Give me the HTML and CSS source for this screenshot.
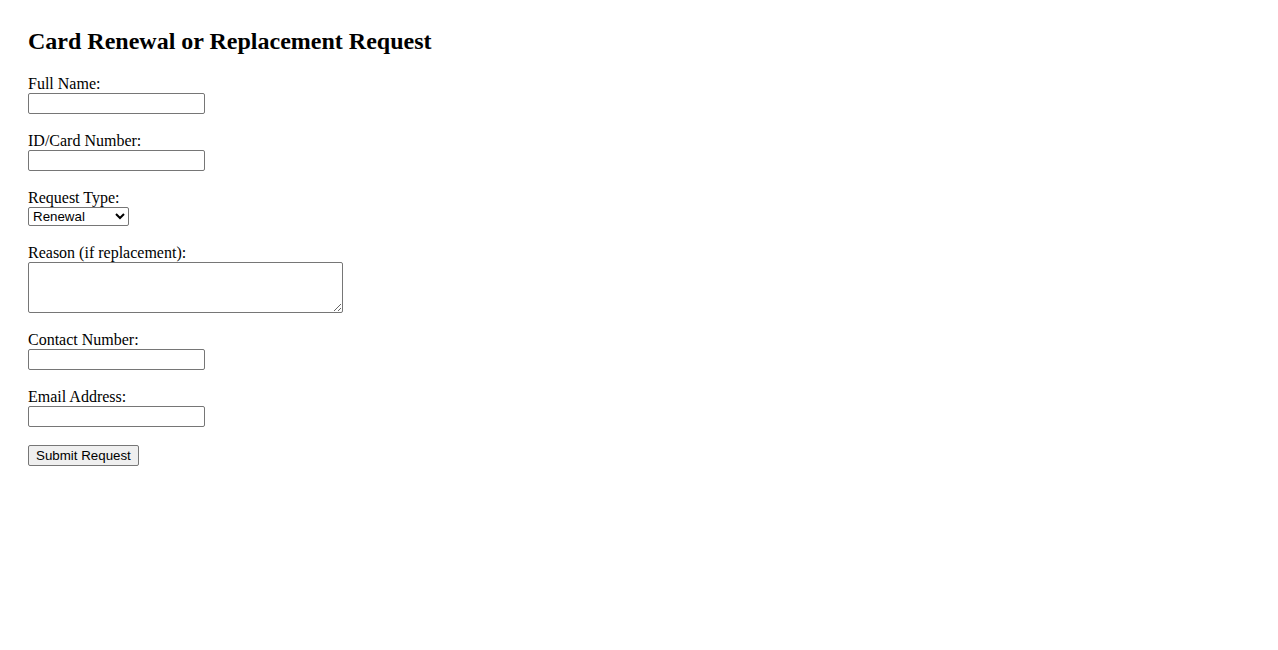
FILE: index.html
```html
<!DOCTYPE html>
<html lang="en">
<head>
    <meta charset="UTF-8">
    <meta name="viewport" content="width=device-width, initial-scale=1.0">
    <title>Card Renewal or Replacement Request</title>
    <link rel="stylesheet" href="styles.css">
</head>
<body>
    <div class="page">
        <h2>Card Renewal or Replacement Request</h2>

        <form class="request-form" onsubmit="return false;">
            <div class="field">
                <label for="fullName">Full Name:</label>
                <input type="text" id="fullName" class="text-input">
            </div>

            <div class="field">
                <label for="cardNumber">ID/Card Number:</label>
                <input type="text" id="cardNumber" class="text-input">
            </div>

            <div class="field">
                <label for="requestType">Request Type:</label>
                <select id="requestType" class="select-input">
                    <option>Renewal</option>
                    <option>Replacement</option>
                </select>
            </div>

            <div class="field">
                <label for="reason">Reason (if replacement):</label>
                <textarea id="reason" class="text-area"></textarea>
            </div>

            <div class="field">
                <label for="contact">Contact Number:</label>
                <input type="text" id="contact" class="text-input">
            </div>

            <div class="field">
                <label for="email">Email Address:</label>
                <input type="email" id="email" class="text-input">
            </div>

            <button type="submit" class="submit-btn">Submit Request</button>
        </form>
    </div>
</body>
</html>
```

FILE: styles.css
```css
* {
    box-sizing: border-box;
}

body {
    margin: 0;
    font-family: 'Liberation Serif', 'Times New Roman', serif;
    font-size: 16px;
    color: #000;
    background: #fff;
}

.page {
    padding: 27px 28px;
}

.page h2 {
    margin: 0 0 20px;
    font-size: 24px;
    line-height: 28px;
    font-weight: bold;
}

.field {
    display: flex;
    flex-direction: column;
    align-items: flex-start;
    margin-bottom: 18px;
}

.field label {
    line-height: 18px;
    padding-top: 1px;
    margin-top: -1px;
}

.text-input,
.select-input,
.text-area,
.submit-btn {
    font-family: 'Liberation Sans', Arial, sans-serif;
    font-size: 13.33px;
    margin: 0;
}

.text-input {
    width: 177px;
    height: 21px;
    padding: 1px 2px;
    border: 1px solid #767676;
    border-radius: 2px;
    background: #fff;
}

.select-input {
    width: 101px;
    height: 19px;
    padding: 0;
    border: 1px solid #767676;
    border-radius: 2px;
    background: #fff;
    color: #000;
}

.text-area {
    width: 315px;
    height: 51px;
    padding: 2px;
    border: 1px solid #767676;
    border-radius: 2px;
    resize: both;
}

.submit-btn {
    height: 21px;
    padding: 1px 7px;
    border: 1px solid #767676;
    border-radius: 2px;
    background: #efefef;
    color: #000;
    cursor: pointer;
}
```
